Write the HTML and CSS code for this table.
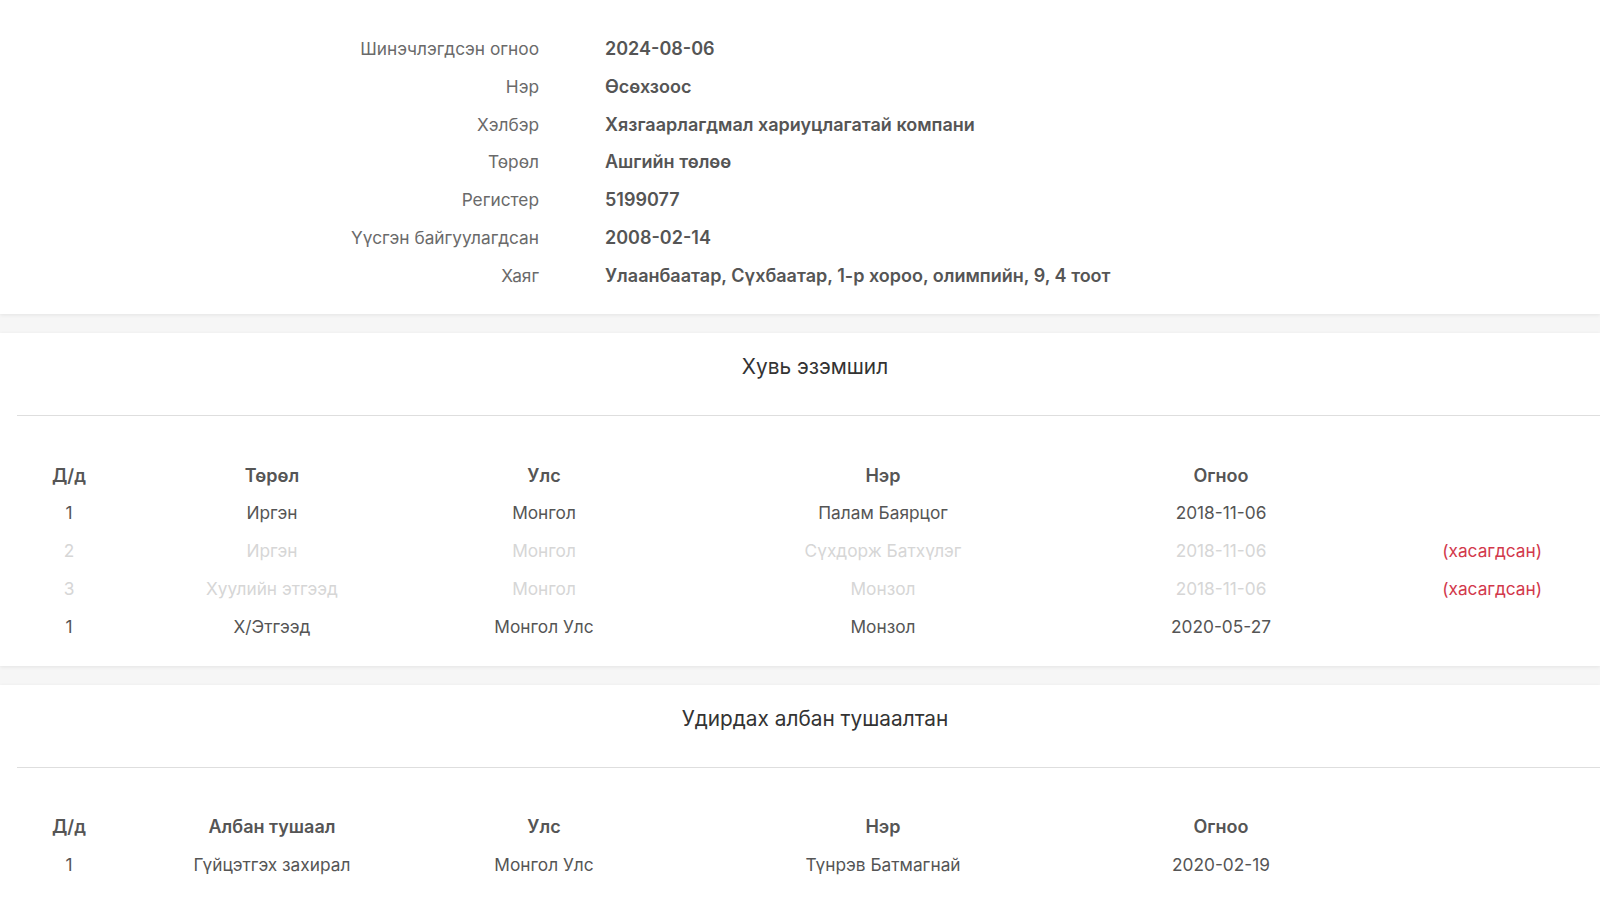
FILE: index.html
```html
<!DOCTYPE html>
<html lang="mn">
<head>
  <meta charset="UTF-8" />
  <title>Компанийн мэдээлэл</title>
  <link rel="stylesheet" href="styles.css">
</head>
<body>
  <div class="card info-card">
    <div class="info-row"><span class="info-label">Шинэчлэгдсэн огноо</span><span class="info-value">2024-08-06</span></div>
    <div class="info-row"><span class="info-label">Нэр</span><span class="info-value">Өсөхзоос</span></div>
    <div class="info-row"><span class="info-label">Хэлбэр</span><span class="info-value">Хязгаарлагдмал хариуцлагатай компани</span></div>
    <div class="info-row"><span class="info-label">Төрөл</span><span class="info-value">Ашгийн төлөө</span></div>
    <div class="info-row"><span class="info-label">Регистер</span><span class="info-value">5199077</span></div>
    <div class="info-row"><span class="info-label">Үүсгэн байгуулагдсан</span><span class="info-value">2008-02-14</span></div>
    <div class="info-row"><span class="info-label">Хаяг</span><span class="info-value">Улаанбаатар, Сүхбаатар, 1-р хороо, олимпийн, 9, 4 тоот</span></div>
  </div>

  <div class="card">
    <div class="card-head"><h3>Хувь эзэмшил</h3></div>
    <table class="data-table">
      <colgroup>
        <col class="c-num"><col class="c-type"><col class="c-country"><col class="c-name"><col class="c-date"><col>
      </colgroup>
      <thead>
        <tr><th>Д/д</th><th>Төрөл</th><th>Улс</th><th>Нэр</th><th>Огноо</th><th></th></tr>
      </thead>
      <tbody>
        <tr><td>1</td><td>Иргэн</td><td>Монгол</td><td>Палам Баярцог</td><td>2018-11-06</td><td></td></tr>
        <tr class="removed"><td>2</td><td>Иргэн</td><td>Монгол</td><td>Сүхдорж Батхүлэг</td><td>2018-11-06</td><td class="note">(хасагдсан)</td></tr>
        <tr class="removed"><td>3</td><td>Хуулийн этгээд</td><td>Монгол</td><td>Монзол</td><td>2018-11-06</td><td class="note">(хасагдсан)</td></tr>
        <tr><td>1</td><td>Х/Этгээд</td><td>Монгол Улс</td><td>Монзол</td><td>2020-05-27</td><td></td></tr>
      </tbody>
    </table>
  </div>

  <div class="card">
    <div class="card-head"><h3>Удирдах албан тушаалтан</h3></div>
    <table class="data-table">
      <colgroup>
        <col class="c-num"><col class="c-type"><col class="c-country"><col class="c-name"><col class="c-date"><col>
      </colgroup>
      <thead>
        <tr><th>Д/д</th><th>Албан тушаал</th><th>Улс</th><th>Нэр</th><th>Огноо</th><th></th></tr>
      </thead>
      <tbody>
        <tr><td>1</td><td>Гүйцэтгэх захирал</td><td>Монгол Улс</td><td>Түнрэв Батмагнай</td><td>2020-02-19</td><td></td></tr>
      </tbody>
    </table>
  </div>
</body>
</html>
```

FILE: styles.css
```css
body {
  margin: 0;
  background: #f6f6f6;
  font-family: Inter, 'Noto Sans', sans-serif;
  font-size: 17.3px;
  color: #555;
  overflow: hidden;
}

.card {
  background: #fff;
  box-shadow: 0 1px 4px rgba(0,0,0,0.08);
  padding-bottom: 21px;
  margin-bottom: 19px;
}

/* общая информация */
.info-card {
  padding-top: 30px;
  padding-bottom: 20px;
}

.info-row {
  display: grid;
  grid-template-columns: 539px 1fr;
  column-gap: 66px;
  line-height: 37.75px;
}

.info-label {
  text-align: right;
  color: #6a6a6a;
}

.info-value {
  font-size: 18px;
  font-weight: 600;
  color: #555;
}

.card-head {
  margin-left: 17px;
  padding-left: 13px;
  padding-top: 18.5px;
  height: 63.5px;
  border-bottom: 1px solid #dedede;
  text-align: center;
}

.card-head h3 {
  margin: 0;
  font-size: 20.8px;
  line-height: 30px;
  font-weight: 400;
  color: #333;
}

.data-table {
  margin-left: 17px;
  margin-top: 40px;
  width: 1583px;
  table-layout: fixed;
  border-collapse: collapse;
}

.data-table th,
.data-table td {
  padding: 0;
  height: 37.75px;
  text-align: center;
  white-space: nowrap;
}

.data-table th {
  font-size: 18px;
  font-weight: 600;
  color: #555;
}

.c-num { width: 104px; }
.c-type { width: 302px; }
.c-country { width: 242px; }
.c-name { width: 436px; }
.c-date { width: 240px; }

.data-table tr.removed td {
  color: #d6d6d6;
}

.data-table td.note {
  text-align: right;
  padding-right: 58px;
  color: #d2384b !important;
}
```
